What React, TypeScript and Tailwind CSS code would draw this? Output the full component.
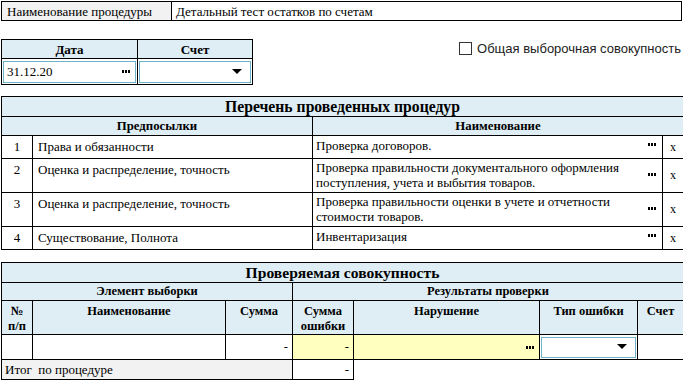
import React from "react";

const head = "bg-[#dfeef4] border border-black font-bold text-center";
const cell = "border border-black align-top px-[5px] pt-[3px]";

function Dots() {
  return (
    <svg width="8" height="3" viewBox="0 0 8 3" className="shrink-0">
      <rect x="0" y="0" width="2" height="3" fill="#000" />
      <rect x="3" y="0" width="2" height="3" fill="#000" />
      <rect x="6" y="0" width="2" height="3" fill="#000" />
    </svg>
  );
}

function Arrow() {
  return (
    <svg width="10" height="6" viewBox="0 0 10 6">
      <path d="M0 0 L10 0 L5 5 Z" fill="#000" />
    </svg>
  );
}

const procedures = [
  { n: 1, pre: "Права и обязанности", name: ["Проверка договоров."] },
  {
    n: 2,
    pre: "Оценка и распределение, точность",
    name: ["Проверка правильности документального оформления", "поступления, учета и выбытия товаров."],
  },
  {
    n: 3,
    pre: "Оценка и распределение, точность",
    name: ["Проверка правильности оценки в учете и отчетности", "стоимости товаров."],
  },
  { n: 4, pre: "Существование, Полнота", name: ["Инвентаризация"] },
];

export default function App() {
  return (
    <div className="w-[683px] h-[380px] bg-white text-black text-[13px] leading-[15px] [font-family:'Liberation_Serif',serif] overflow-hidden">
      {/* Procedure name */}
      <div className="mt-px mx-px flex h-[20px] border border-black">
        <div className="w-[170px] bg-[#f2f2f2] border-r border-black pl-[5px] pt-[2px]">Наименование процедуры</div>
        <div className="flex-1 pl-[4px] pt-[2px]">Детальный тест остатков по счетам</div>
      </div>

      {/* Date / account */}
      <div className="mt-[18px] mx-px flex justify-between items-start">
        <table className="border-collapse table-fixed w-[251px]">
          <colgroup>
            <col className="w-[136px]" />
            <col className="w-[115px]" />
          </colgroup>
          <tbody>
            <tr className="h-[19px]">
              <td className={head}>Дата</td>
              <td className={head}>Счет</td>
            </tr>
            <tr className="h-[26px]">
              <td className="border border-black p-px">
                <div className="h-[22px] border border-[#6fb3c9] flex items-center justify-between pl-[3px] pr-[5px]">
                  <span>31.12.20</span>
                  <Dots />
                </div>
              </td>
              <td className="border border-black p-px">
                <div className="h-[22px] border border-[#6fb3c9] flex items-center justify-end pr-[8px]">
                  <Arrow />
                </div>
              </td>
            </tr>
          </tbody>
        </table>
        <label className="flex items-center gap-[5px] mt-[2px] mr-px [font-family:'Liberation_Sans',sans-serif] text-[13px] text-[#222]">
          <span className="w-[13px] h-[13px] border border-[#333] bg-white" />
          Общая выборочная совокупность
        </label>
      </div>

      {/* Procedures list */}
      <table className="mt-[11px] ml-px border-collapse table-fixed w-[682px]">
        <colgroup>
          <col className="w-[31px]" />
          <col className="w-[280px]" />
          <col className="w-[350px]" />
          <col className="w-[21px]" />
        </colgroup>
        <tbody>
          <tr className="h-[20px]">
            <td colSpan={4} className={`${head} text-[15.7px]`}>Перечень проведенных процедур</td>
          </tr>
          <tr className="h-[19px]">
            <td colSpan={2} className={`${head} text-[12.8px]`}>Предпосылки</td>
            <td colSpan={2} className={`${head} text-[12.8px]`}>Наименование</td>
          </tr>
          {procedures.map((p) => (
            <tr key={p.n} className={p.name.length > 1 ? "h-[34px]" : "h-[23px]"}>
              <td className={`${cell} text-center`}>{p.n}</td>
              <td className={cell}>{p.pre}</td>
              <td className="border border-black align-top">
                <div className="flex justify-between items-center pl-[3px] pr-[6px] h-full">
                  <div className={p.name.length > 1 ? "pt-[1px]" : "pt-[2px] self-start"}>
                    {p.name.map((l) => (
                      <div key={l}>{l}</div>
                    ))}
                  </div>
                  <Dots />
                </div>
              </td>
              <td className="border border-black text-center text-[12px]">x</td>
            </tr>
          ))}
        </tbody>
      </table>

      {/* Sample population */}
      <table className="mt-[12px] ml-px border-collapse table-fixed w-[682px]">
        <colgroup>
          <col className="w-[31px]" />
          <col className="w-[193px]" />
          <col className="w-[67px]" />
          <col className="w-[61px]" />
          <col className="w-[186px]" />
          <col className="w-[98px]" />
          <col className="w-[46px]" />
        </colgroup>
        <tbody className="text-[12.5px]">
          <tr className="h-[20px]">
            <td colSpan={7} className={`${head} text-[15.6px]`}>Проверяемая совокупность</td>
          </tr>
          <tr className="h-[18px]">
            <td colSpan={3} className={head}>Элемент выборки</td>
            <td colSpan={4} className={head}>Результаты проверки</td>
          </tr>
          <tr className="h-[34px]">
            <td className={`${head} align-top pt-[3px]`}>№<br />п/п</td>
            <td className={`${head} align-top pt-[3px]`}>Наименование</td>
            <td className={`${head} align-top pt-[3px]`}>Сумма</td>
            <td className={`${head} align-top pt-[3px]`}>Сумма<br />ошибки</td>
            <td className={`${head} align-top pt-[3px]`}>Нарушение</td>
            <td className={`${head} align-top pt-[3px]`}>Тип ошибки</td>
            <td className={`${head} align-top pt-[3px]`}>Счет</td>
          </tr>
          <tr className="h-[25px]">
            <td className="border border-black" />
            <td className="border border-black" />
            <td className="border border-black text-right pr-[4px]">-</td>
            <td className="border border-black bg-[#ffffc0] text-right pr-[4px]">-</td>
            <td className="border border-black bg-[#ffffc0]">
              <div className="flex justify-end pr-[5px]">
                <Dots />
              </div>
            </td>
            <td className="border border-black p-px">
              <div className="h-[21px] border border-[#6fb3c9] bg-white flex items-center justify-end pr-[8px]">
                <Arrow />
              </div>
            </td>
            <td className="border border-black" />
          </tr>
          <tr className="h-[20px] text-[13px]">
            <td colSpan={3} className="border border-black bg-[#f2f2f2] pl-[3px]">Итог&nbsp; по процедуре</td>
            <td className="border border-black text-right pr-[4px]">-</td>
            <td colSpan={3} className="border-0" />
          </tr>
        </tbody>
      </table>
    </div>
  );
}
